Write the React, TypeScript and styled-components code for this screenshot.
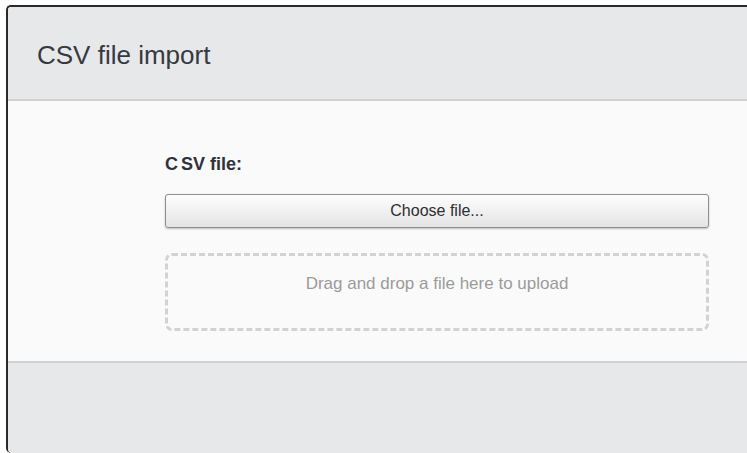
import React from "react";
import styled, { createGlobalStyle } from "styled-components";

const GlobalStyle = createGlobalStyle`
  html, body {
    margin: 0;
    padding: 0;
    background: #ffffff;
    overflow: hidden;
  }

  body {
    font-family: "Liberation Sans", Arial, sans-serif;
  }
`;

const Stage = styled.div`
  padding: 5px 0 0 6px;
  height: 453px;
  box-sizing: border-box;
`;

const Dialog = styled.div`
  width: 760px;
  height: 446px;
  display: flex;
  flex-direction: column;
  border-top: 2px solid #2a2a2a;
  border-left: 2px solid #2a2a2a;
  border-radius: 5px 0 0 5px;
  overflow: hidden;
  background: #e7e8ea;
`;

const Header = styled.header`
  height: 92px;
  display: flex;
  align-items: center;
  padding-left: 29px;
  background: #e7e8ea;
  border-bottom: 2px solid #d0d1d3;
`;

const Title = styled.h1`
  margin: 5px 0 0;
  font-size: 26px;
  font-weight: normal;
  color: #353a40;
`;

const Body = styled.section`
  height: 262px;
  box-sizing: border-box;
  padding: 53px 0 0 157px;
  background: #fafafa;
  border-bottom: 2px solid #d0d1d3;
`;

const Field = styled.div`
  width: 544px;
  display: flex;
  flex-direction: column;
`;

const Label = styled.label`
  font-size: 18px;
  font-weight: bold;
  color: #2e333a;
  margin-bottom: 20px;
  line-height: 20px;

  span {
    margin-right: 3px;
  }
`;

const ChooseButton = styled.button`
  height: 34px;
  width: 100%;
  font-family: "Liberation Sans", Arial, sans-serif;
  font-size: 16px;
  color: #2e2e2e;
  background: linear-gradient(#fdfdfd, #e4e4e4);
  border: 1px solid #8e8e8e;
  border-radius: 3px;
  box-shadow: 0 1px 2px rgba(0, 0, 0, 0.25);
  cursor: pointer;
`;

const DropZone = styled.div`
  margin-top: 25px;
  height: 78px;
  box-sizing: border-box;
  border: 3px dashed #d2d2d2;
  border-radius: 7px;
  display: flex;
  justify-content: center;
  padding-top: 18px;
  font-size: 17px;
  color: #9a9a9a;
`;

const Footer = styled.footer`
  flex: 1;
  background: #e7e8ea;
`;

const App = () => {
  return (
    <>
      <GlobalStyle />
      <Stage>
        <Dialog>
          <Header>
            <Title>CSV file import</Title>
          </Header>
          <Body>
            <Field>
              <Label>
                <span>C</span>SV file:
              </Label>
              <ChooseButton type="button">Choose file...</ChooseButton>
              <DropZone>Drag and drop a file here to upload</DropZone>
            </Field>
          </Body>
          <Footer />
        </Dialog>
      </Stage>
    </>
  );
};

export default App;
